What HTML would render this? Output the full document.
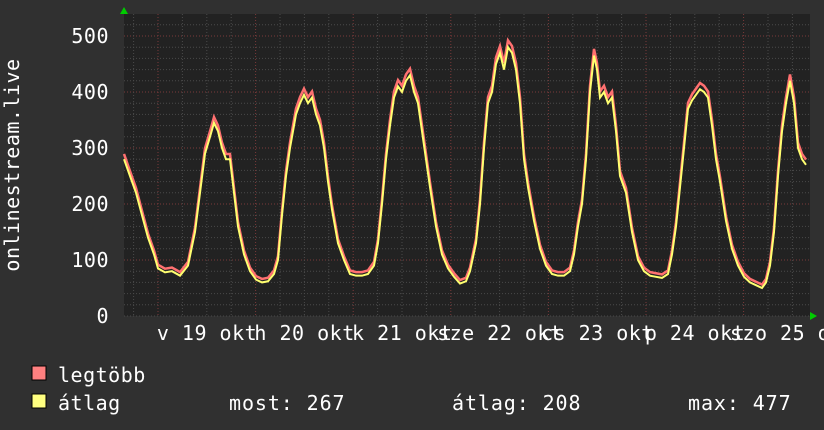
<!DOCTYPE html>
<html><head><meta charset="utf-8"><style>
body{margin:0;width:824px;height:430px;background:#303030;overflow:hidden;font-family:"DejaVu Sans Mono","Liberation Mono",monospace;color:#fff}
svg{position:absolute;left:0;top:0}
</style></head><body>
<svg id="s" width="824" height="430" xmlns="http://www.w3.org/2000/svg" font-family="DejaVu Sans Mono, Liberation Mono, monospace" font-size="20" fill="#fff" letter-spacing="0.5">
<rect x="124" y="14" width="686" height="302" fill="#222"/>
<g id="grid"></g>
<polyline id="pmax" fill="none" stroke="#ff7070" stroke-width="2.5"/>
<polyline id="pavg" fill="none" stroke="#ffff70" stroke-width="2"/>
<polygon points="120,14 128,14 124,7" fill="#0c0"/>
<polygon points="810,312 810,320 817,316" fill="#0c0"/>
<g text-anchor="end">
<text x="109" y="43">500</text><text x="109" y="99">400</text><text x="109" y="155">300</text>
<text x="109" y="211">200</text><text x="109" y="267">100</text><text x="109" y="323">0</text>
</g>
<text transform="translate(19,165) rotate(-90)" text-anchor="middle">onlinestream.live</text>
<g id="xl"></g>
<rect x="32" y="366" width="14" height="14" fill="#ff8080" stroke="#000"/>
<rect x="32" y="394" width="14" height="14" fill="#ffff80" stroke="#000"/>
<text x="58" y="382">legtöbb</text>
<text x="58" y="410">átlag</text>
<text x="229" y="410" letter-spacing="0.9">most: 267</text>
<text x="452" y="410" letter-spacing="0.9">átlag: 208</text>
<text x="688" y="410" letter-spacing="0.9">max: 477</text>
</svg>
<script>
var g=document.getElementById('grid'),h='';
for(var i=0;i<=27;i++){var v=i*11.2,y=316-v;if(y<14)break;var maj=i%5==0&&i>0;
h+='<line x1="124" x2="810" y1="'+y+'" y2="'+y+'" stroke="'+(maj?'#7a3a3a':'#4a4a4a')+'" stroke-dasharray="1,2"/>';}
for(var x=133.6;x<810;x+=24.4){var maj=Math.abs((x-158)/97.6-Math.round((x-158)/97.6))<0.01;
h+='<line y1="14" y2="316" x1="'+x+'" x2="'+x+'" stroke="'+(maj?'#7a3a3a':'#4a4a4a')+'" stroke-dasharray="1,2"/>';}
g.innerHTML=h;
var labs=['v 19 okt','h 20 okt','k 21 okt','sze 22 okt','cs 23 okt','p 24 okt','szo 25 okt'];
var xl='';for(var i=0;i<7;i++){xl+='<text x="'+(207+97.6*i)+'" y="340" text-anchor="middle">'+labs[i]+'</text>';}
document.getElementById('xl').innerHTML=xl;
var d=[124,280,130,250,136,220,142,180,148,140,154,110,158,85,165,78,172,80,180,72,188,90,195,150,200,220,205,290,210,320,214,345,218,330,222,300,226,280,230,280,234,220,238,160,244,110,250,80,256,65,262,60,268,62,274,75,278,100,282,180,286,250,290,300,296,360,300,380,304,395,308,380,312,390,316,360,320,340,324,300,328,240,332,190,338,130,344,100,350,75,356,72,362,72,368,75,374,90,378,130,382,200,386,280,390,340,394,390,398,410,402,400,406,420,410,430,414,400,418,380,422,330,426,280,430,230,436,160,442,110,448,85,454,70,460,58,466,62,470,80,476,130,480,200,484,300,488,380,492,400,496,450,500,470,504,440,508,480,512,470,516,440,520,380,524,280,528,230,534,170,540,120,546,90,552,75,558,72,564,72,570,80,574,110,578,160,582,200,586,280,590,400,594,465,597,440,600,390,604,400,608,380,612,390,616,330,620,250,626,220,632,150,638,100,644,80,650,72,656,70,662,68,668,75,672,110,676,160,680,230,684,300,688,370,692,385,696,395,700,405,704,400,708,390,712,340,716,280,720,240,726,170,732,120,738,90,744,70,750,60,756,55,762,50,766,60,770,90,774,150,778,250,782,330,786,380,790,420,794,380,798,300,802,280,806,270];
var a='',m='';for(var i=0;i<d.length;i+=2){var y=316-0.56*d[i+1];a+=d[i]+','+y+' ';m+=d[i]+','+(y-3-d[i+1]*0.008)+' ';}
document.getElementById('pavg').setAttribute('points',a);
document.getElementById('pmax').setAttribute('points',m);
</script>
</body></html>
